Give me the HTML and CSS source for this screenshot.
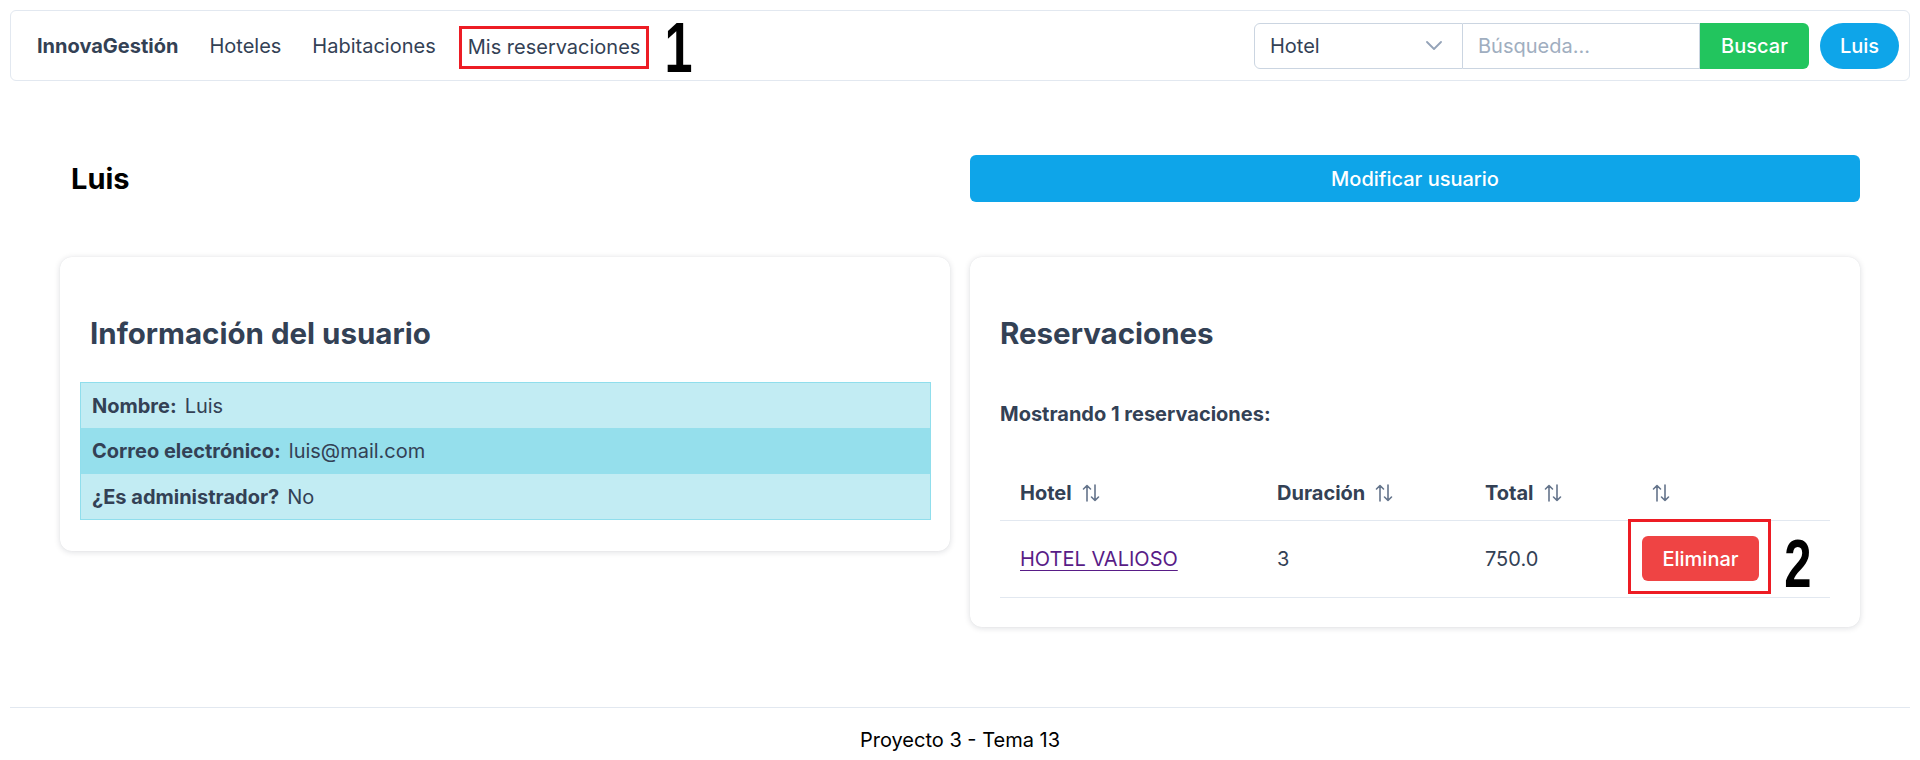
FILE: index.html
```html
<!DOCTYPE html>
<html lang="es">
<head>
<meta charset="utf-8">
<title>InnovaGestión</title>
<link rel="stylesheet" href="styles.css">
</head>
<body>
<nav class="navbar">
  <div class="nav-left">
    <a class="brand" href="#">InnovaGestión</a>
    <a class="nav-link" href="#">Hoteles</a>
    <a class="nav-link" href="#">Habitaciones</a>
    <span class="nav-marked"><a class="nav-link" href="#">Mis reservaciones</a></span>
    <span class="mark-num mark-one">1</span>
  </div>
  <div class="nav-right">
    <form class="search">
      <div class="select">
        <span>Hotel</span>
        <svg class="chev" width="16" height="9" viewBox="0 0 16 9"><polyline points="1,1 8,8 15,1" fill="none" stroke="#94a3b8" stroke-width="1.8" stroke-linecap="round" stroke-linejoin="round"/></svg>
      </div>
      <div class="input">Búsqueda...</div>
      <button class="btn-search" type="button">Buscar</button>
    </form>
    <button class="btn-user" type="button">Luis</button>
  </div>
</nav>

<main class="container">
  <div class="head-row">
    <h1 class="user-name">Luis</h1>
    <button class="btn-modify" type="button">Modificar usuario</button>
  </div>
  <div class="cards">
    <section class="card card-info">
      <h2 class="card-title">Información del usuario</h2>
      <div class="info-table">
        <div class="info-row light"><b>Nombre:</b><span>Luis</span></div>
        <div class="info-row dark"><b>Correo electrónico:</b><span>luis@mail.com</span></div>
        <div class="info-row light"><b>¿Es administrador?</b><span>No</span></div>
      </div>
    </section>
    <section class="card card-res">
      <h2 class="card-title">Reservaciones</h2>
      <p class="count">Mostrando 1 reservaciones:</p>
      <div class="res-table">
        <div class="res-row res-head">
          <div class="c c1">Hotel <svg class="sort" width="20" height="18" viewBox="0 0 20 18"><path d="M6 17V1.5M2.5 5L6 1.5L9.5 5M14 1v15.5M10.5 13l3.5 3.5l3.5-3.5" fill="none" stroke="#64748b" stroke-width="1.6" stroke-linecap="round" stroke-linejoin="round"/></svg></div>
          <div class="c c2">Duración <svg class="sort" width="20" height="18" viewBox="0 0 20 18"><path d="M6 17V1.5M2.5 5L6 1.5L9.5 5M14 1v15.5M10.5 13l3.5 3.5l3.5-3.5" fill="none" stroke="#64748b" stroke-width="1.6" stroke-linecap="round" stroke-linejoin="round"/></svg></div>
          <div class="c c3">Total <svg class="sort" width="20" height="18" viewBox="0 0 20 18"><path d="M6 17V1.5M2.5 5L6 1.5L9.5 5M14 1v15.5M10.5 13l3.5 3.5l3.5-3.5" fill="none" stroke="#64748b" stroke-width="1.6" stroke-linecap="round" stroke-linejoin="round"/></svg></div>
          <div class="c c4 c4h"><svg class="sort" width="20" height="18" viewBox="0 0 20 18"><path d="M6 17V1.5M2.5 5L6 1.5L9.5 5M14 1v15.5M10.5 13l3.5 3.5l3.5-3.5" fill="none" stroke="#64748b" stroke-width="1.6" stroke-linecap="round" stroke-linejoin="round"/></svg></div>
        </div>
        <div class="res-row res-body">
          <div class="c c1"><a class="hotel-link" href="#">HOTEL VALIOSO</a></div>
          <div class="c c2">3</div>
          <div class="c c3">750.0</div>
          <div class="c c4">
            <span class="marked-btn"><button class="btn-delete" type="button">Eliminar</button></span>
            <span class="mark-num mark-two">2</span>
          </div>
        </div>
      </div>
    </section>
  </div>
</main>

<footer class="footer">Proyecto 3 - Tema 13</footer>
</body>
</html>
```

FILE: styles.css
```css
* { box-sizing: border-box; }

html, body {
  margin: 0;
  padding: 0;
  background: #ffffff;
}

body {
  font-family: Inter, "Noto Sans", sans-serif;
  color: #334155;
  font-size: 20px;
  padding: 10px 10px 0;
}

a { text-decoration: none; color: inherit; }

button {
  font-family: inherit;
  border: none;
  cursor: pointer;
}

/* Navbar */
.navbar {
  height: 71px;
  border: 1px solid #e2e8f0;
  border-radius: 6px;
  display: flex;
  align-items: center;
  justify-content: space-between;
  padding: 0 10px 0 26px;
}

.nav-left {
  display: flex;
  align-items: center;
}

.brand {
  font-weight: 700;
  font-size: 20px;
  color: #334155;
  margin-right: 31px;
}

.nav-link {
  font-size: 20px;
  color: #334155;
  margin-right: 31px;
}

.nav-marked {
  margin-left: -8px;
  margin-top: 3px;
  border: 3px solid #ed1c24;
  padding: 5px 6px 6px 6px;
  display: inline-flex;
  line-height: 26px;
}

.nav-marked .nav-link { margin-right: 0; }

.mark-num {
  font-family: "Liberation Sans", Arial, sans-serif;
  font-weight: 700;
  color: #000;
  display: inline-block;
  transform: scaleX(0.72);
}

.mark-one {
  font-size: 70px;
  line-height: 54px;
  margin-left: 10px;
  margin-top: 4px;
}

.nav-right {
  display: flex;
  align-items: center;
  gap: 11px;
}

.search {
  display: flex;
  height: 46px;
  margin: 0;
}

.select {
  width: 209px;
  border: 1px solid #cbd5e1;
  border-radius: 6px 0 0 6px;
  display: flex;
  align-items: center;
  justify-content: space-between;
  padding: 0 20px 0 15px;
  font-size: 20px;
  color: #334155;
}

.input {
  width: 237px;
  border: 1px solid #cbd5e1;
  border-left: none;
  display: flex;
  align-items: center;
  padding: 0 15px;
  color: #a0aec0;
  font-size: 20px;
}

.btn-search {
  width: 109px;
  background: #22c55e;
  color: #fff;
  font-size: 20px;
  font-weight: 500;
  border-radius: 0 6px 6px 0;
}

.btn-user {
  width: 79px;
  height: 46px;
  border-radius: 23px;
  background: #0ea5e9;
  color: #fff;
  font-size: 20px;
  font-weight: 500;
}

/* Main */
.container {
  width: 1800px;
  margin: 74px 0 0 50px;
}

.head-row {
  display: grid;
  grid-template-columns: 1fr 1fr;
  gap: 20px;
  align-items: center;
}

.user-name {
  margin: 0;
  padding-left: 11px;
  font-size: 29px;
  font-weight: 700;
  color: #000;
}

.btn-modify {
  height: 47px;
  background: #0ea5e9;
  color: #fff;
  font-size: 20px;
  font-weight: 500;
  border-radius: 6px;
}

.cards {
  margin-top: 55px;
  display: grid;
  grid-template-columns: 1fr 1fr;
  gap: 20px;
  align-items: start;
}

.card {
  background: #fff;
  border-radius: 12px;
  box-shadow: 0 1px 6px rgba(15, 23, 42, 0.14), 0 0 1px rgba(15, 23, 42, 0.08);
  padding: 58px 30px 31px;
}

.card-res { padding-bottom: 29px; }

.card-title {
  margin: 0;
  font-size: 29.5px;
  line-height: 36px;
  font-weight: 700;
  color: #334155;
}

/* info table */
.info-table {
  margin: 31px -11px 0 -10px;
  border: 1px solid #90deec;
}

.info-row {
  display: flex;
  align-items: center;
  gap: 8px;
  height: 45px;
  padding: 0 11px;
  font-size: 20px;
  color: #334155;
}

.info-row b { font-weight: 700; }

.info-row.light { background: #c2ecf3; }
.info-row.dark { background: #95dfec; height: 46px; }

/* reservations */
.count {
  margin: 50px 0 0;
  font-size: 20px;
  line-height: 26px;
  font-weight: 700;
  color: #334155;
}

.res-table {
  margin-top: 40px;
}

.res-row {
  display: flex;
  align-items: center;
  border-bottom: 1px solid #e2e8f0;
}

.res-head {
  height: 54px;
  font-weight: 700;
  padding-bottom: 2px;
}

.res-body {
  height: 77px;
}

.c {
  padding: 0 0 0 20px;
  display: flex;
  align-items: center;
  font-size: 20px;
  color: #334155;
}

.c .sort { margin-left: 9px; }
.c4h .sort { margin-left: 0; }

.c1 { width: 257px; }
.c2 { width: 208px; }
.c3 { width: 166px; }
.c4 { flex: 1; padding-left: 0; align-self: stretch; align-items: flex-start; }
.c4h { padding-left: 20px; align-self: auto; align-items: center; }

.hotel-link {
  color: #581c87;
  text-decoration: underline;
  text-underline-offset: 4px;
  text-decoration-thickness: 1px;
}

.marked-btn {
  border: 3px solid #ed1c24;
  padding: 14px 9px 10px 11px;
  display: inline-flex;
  margin-top: -2px;
  margin-left: -3px;
}

.btn-delete {
  width: 117px;
  height: 45px;
  background: #ef4444;
  color: #fff;
  font-size: 20px;
  font-weight: 500;
  border-radius: 6px;
}

.mark-two {
  font-size: 68px;
  line-height: 50px;
  margin-left: 8px;
  margin-top: 17px;
}

/* Footer */
.footer {
  margin-top: 80px;
  border-top: 1px solid #e2e8f0;
  text-align: center;
  padding-top: 19px;
  line-height: 26px;
  font-size: 20px;
  color: #000;
}
```
